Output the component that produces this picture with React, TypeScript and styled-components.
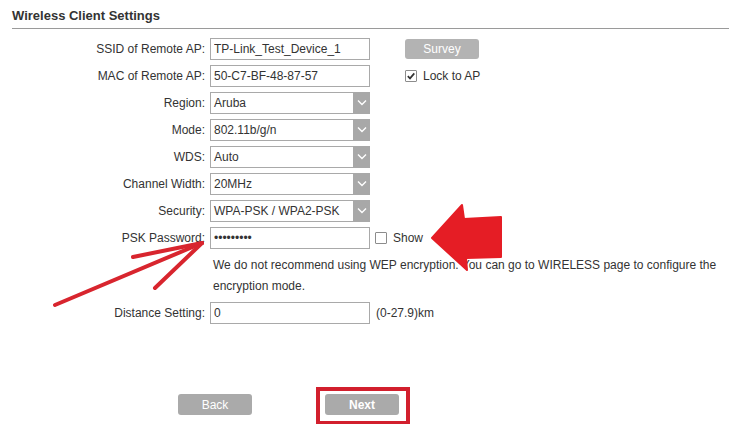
import React from 'react';
import styled, { createGlobalStyle } from 'styled-components';

const GlobalStyle = createGlobalStyle`
  html, body {
    margin: 0;
    padding: 0;
    background: #ffffff;
  }
  body {
    font-family: "Liberation Sans", Arial, sans-serif;
    font-size: 12px;
    color: #333333;
  }
`;

type SelectProps = { value: string };
type CheckProps = { checked?: boolean; label: string };

const Select = ({ value }: SelectProps) => (
  <SelectBox>
    <SelectValue>{value}</SelectValue>
    <SelectArrow>
      <svg width="10" height="7" viewBox="0 0 10 7">
        <path d="M1 1.5 L5 5.5 L9 1.5" fill="none" stroke="#ffffff" strokeWidth="1.4" />
      </svg>
    </SelectArrow>
  </SelectBox>
);

const Check = ({ checked, label }: CheckProps) => (
  <CheckLabel>
    <CheckBox>
      {checked && (
        <svg width="10" height="10" viewBox="0 0 10 10">
          <path d="M1.8 5.2 L4 7.4 L8.3 2.4" fill="none" stroke="#333" strokeWidth="1.7" />
        </svg>
      )}
    </CheckBox>
    {label}
  </CheckLabel>
);

const App = () => {
  return (
    <Page>
      <GlobalStyle />
      <Title>Wireless Client Settings</Title>

      <Form>
        <Row>
          <Label>SSID of Remote AP:</Label>
          <TextInput defaultValue="TP-Link_Test_Device_1" />
          <Extra $offset={30}>
            <SurveyButton>Survey</SurveyButton>
          </Extra>
        </Row>
        <Row>
          <Label>MAC of Remote AP:</Label>
          <TextInput defaultValue="50-C7-BF-48-87-57" />
          <Extra $offset={30}>
            <Check checked label="Lock to AP" />
          </Extra>
        </Row>
        <Row>
          <Label>Region:</Label>
          <Select value="Aruba" />
        </Row>
        <Row>
          <Label>Mode:</Label>
          <Select value="802.11b/g/n" />
        </Row>
        <Row>
          <Label>WDS:</Label>
          <Select value="Auto" />
        </Row>
        <Row>
          <Label>Channel Width:</Label>
          <Select value="20MHz" />
        </Row>
        <Row>
          <Label>Security:</Label>
          <Select value="WPA-PSK / WPA2-PSK" />
        </Row>
        <Row>
          <Label>PSK Password:</Label>
          <TextInput type="password" defaultValue="123456789" />
          <Extra $offset={0}>
            <Check label="Show" />
          </Extra>
        </Row>

        <Notice>
          We do not recommend using WEP encryption. You can go to WIRELESS page to configure the
          encryption mode.
        </Notice>

        <Row>
          <Label>Distance Setting:</Label>
          <TextInput defaultValue="0" />
          <Extra $offset={1}>(0-27.9)km</Extra>
        </Row>
      </Form>

      <Actions>
        <ActionButton>Back</ActionButton>
        <Highlight>
          <ActionButton $primary>Next</ActionButton>
        </Highlight>
      </Actions>

      {/* hand-drawn annotation arrows */}
      <Marks width="729" height="424" viewBox="0 0 729 424">
        <polygon
          points="432,238 462,205 464,219 501,217 501,257 466,258 467,270"
          fill="#e51d25"
          stroke="#e51d25"
          strokeWidth="2"
          strokeLinejoin="round"
        />
        <g stroke="#d8252e" strokeWidth="4" strokeLinecap="round" fill="none">
          <line x1="55" y1="305" x2="202" y2="243" />
          <line x1="202" y1="243" x2="133" y2="257" />
          <line x1="202" y1="243" x2="155" y2="288" />
        </g>
      </Marks>
    </Page>
  );
};
export default App;

const Page = styled.div`
  position: relative;
  width: 729px;
  height: 424px;
  overflow: hidden;
`;

const Title = styled.h2`
  margin: 0 0 0 12px;
  padding: 8px 0 4px;
  font-size: 13px;
  line-height: 16px;
  font-weight: bold;
  color: #333333;
  border-bottom: 1px solid #9a9a9a;
`;

const Form = styled.div`
  padding-top: 6px;
`;

const Row = styled.div`
  display: grid;
  grid-template-columns: 205px 160px 1fr;
  column-gap: 5px;
  align-items: center;
  height: 27px;
`;

const Label = styled.div`
  text-align: right;
  white-space: nowrap;
`;

const Extra = styled.div<{ $offset: number }>`
  display: flex;
  align-items: center;
  padding-left: ${(p) => p.$offset}px;
  white-space: nowrap;
`;

const TextInput = styled.input`
  box-sizing: border-box;
  width: 160px;
  height: 22px;
  margin: 0;
  padding: 0 3px;
  border: 1px solid #a9a9a9;
  border-radius: 0;
  outline: none;
  font-family: "Liberation Sans", Arial, sans-serif;
  font-size: 12px;
  color: #333333;
  background: #ffffff;
`;

const SelectBox = styled.div`
  box-sizing: border-box;
  display: flex;
  align-items: stretch;
  width: 160px;
  height: 22px;
  border: 1px solid #a9a9a9;
  background: #ffffff;
`;

const SelectValue = styled.span`
  flex: 1;
  display: flex;
  align-items: center;
  padding-left: 3px;
  white-space: nowrap;
  overflow: hidden;
`;

const SelectArrow = styled.span`
  width: 17px;
  margin: -1px -1px -1px 0;
  display: flex;
  align-items: center;
  justify-content: center;
  background: #a8a8a8;
`;

const CheckLabel = styled.label`
  display: flex;
  align-items: center;
  gap: 6px;
`;

const CheckBox = styled.span`
  box-sizing: border-box;
  width: 12px;
  height: 12px;
  border: 1px solid #8c8c8c;
  border-radius: 1px;
  background: #ffffff;
  display: flex;
  align-items: center;
  justify-content: center;
`;

const SurveyButton = styled.button`
  width: 74px;
  height: 20px;
  padding: 0;
  border: none;
  border-radius: 3px;
  background: #b3b3b3;
  color: #ffffff;
  font-family: "Liberation Sans", Arial, sans-serif;
  font-size: 12px;
`;

const Notice = styled.div`
  margin-left: 213px;
  width: 510px;
  padding: 4px 0 2px;
  line-height: 21px;
`;

const Actions = styled.div`
  display: flex;
  align-items: flex-start;
  gap: 64px;
  margin-top: 61px;
  padding-left: 178px;

  & > button {
    margin-top: 7px;
  }
`;

const Highlight = styled.div`
  padding: 3px 7px 6px 5px;
  border: 4px solid #d21f2d;
`;

const ActionButton = styled.button<{ $primary?: boolean }>`
  display: block;
  width: 74px;
  height: 21px;
  padding: 0;
  border: none;
  border-radius: 3px;
  background: #aaaaaa;
  color: #ffffff;
  font-family: "Liberation Sans", Arial, sans-serif;
  font-size: 12px;
  font-weight: ${(p) => (p.$primary ? 'bold' : 'normal')};
`;

const Marks = styled.svg`
  position: absolute;
  top: 0;
  left: 0;
  pointer-events: none;
`;
